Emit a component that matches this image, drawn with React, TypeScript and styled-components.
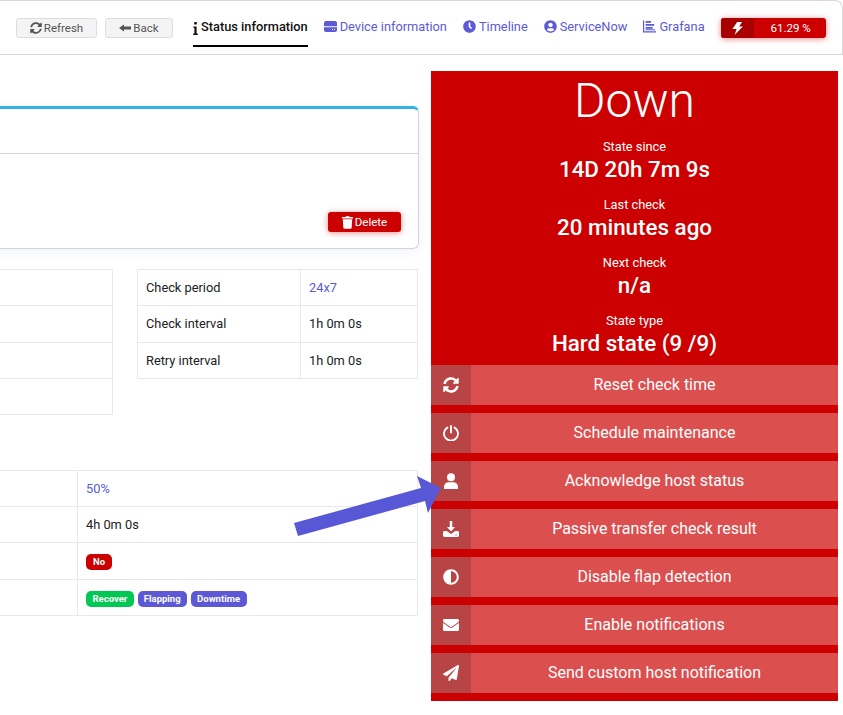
import React from "react";
import styled, { createGlobalStyle } from "styled-components";
import { FaSyncAlt, FaClock, FaUserCircle, FaTrash, FaAdjust, FaEnvelope, FaPaperPlane } from "react-icons/fa";

const Global = createGlobalStyle`
  html, body { margin: 0; padding: 0; background: #fff; }
  body { font-family: Roboto, "Liberation Sans", sans-serif; color: #212121; }
  * { box-sizing: border-box; }
`;

const Page = styled.div`
  position: relative;
  width: 843px;
  height: 715px;
  overflow: hidden;
  background: #fff;
`;

const TopBar = styled.header`
  height: 55px;
  display: flex;
  align-items: flex-start;
  padding: 17px 16px 0 16px;
  border-top: 1px solid #d9d9d9;
  border-right: 1px solid #d9d9d9;
  border-bottom: 1px solid #d6d6d6;
  border-top-right-radius: 8px;
`;

const PlainButton = styled.button`
  flex: none;
  height: 20px;
  width: ${(p) => p.$w}px;
  margin-right: ${(p) => p.$mr}px;
  display: inline-flex;
  align-items: center;
  justify-content: center;
  gap: 2px;
  padding: 0;
  font: 400 11.52px Roboto, sans-serif;
  color: #555;
  background: #f4f4f4;
  border: 1px solid #dedede;
  border-radius: 3px;
  svg { width: 12px; height: 12px; }
`;

const Tab = styled.div`
  flex: none;
  height: 29px;
  margin-right: 16px;
  display: inline-flex;
  align-items: flex-start;
  gap: 3px;
  padding-top: 1px;
  font-size: 12.8px;
  line-height: 15px;
  font-weight: ${(p) => (p.$active ? 500 : 400)};
  color: ${(p) => (p.$active ? "#111" : "#5c5ad6")};
  border-bottom: ${(p) => (p.$active ? "2px solid #000" : "none")};
  white-space: nowrap;
  svg { width: 13px; height: 13px; margin-top: 1px; flex: none; }
`;

const InfoGlyph = styled.svg`
  && { width: 5px; height: 13px; margin-top: 3px; }
`;

const Meter = styled.div`
  flex: none;
  width: 105px;
  height: 20px;
  display: flex;
  background: #cc0000;
  border-radius: 3px;
  color: #fff;
  font-size: 11.52px;
  box-shadow: 0 1px 6px rgba(204, 0, 0, 0.45);
  overflow: hidden;
`;

const MeterIcon = styled.div`
  width: 33px;
  display: flex;
  align-items: center;
  justify-content: center;
  background: #a90000;
  svg { width: 11px; height: 13px; }
`;

const MeterValue = styled.div`
  flex: 1;
  text-align: center;
  line-height: 20px;
  padding-left: 2px;
`;

const Main = styled.main`
  display: flex;
  align-items: flex-start;
  gap: 12px;
`;

const Left = styled.section`
  width: 419px;
  padding-top: 51px;
`;

const Card = styled.div`
  height: 143px;
  margin-left: -8px;
  background: #fff;
  border: 1px solid #d4d4d4;
  border-top: 3px solid #2fb2e8;
  border-radius: 6px;
  box-shadow: 0 2px 10px rgba(70, 90, 160, 0.08);
  display: flex;
  flex-direction: column;
`;

const CardHead = styled.div`
  height: 45px;
  border-bottom: 1px solid #d4d4d4;
`;

const CardBody = styled.div`
  flex: 1;
  display: flex;
  justify-content: flex-end;
  align-items: flex-start;
  padding: 58px 17px 0 0;
`;

const DangerButton = styled.button`
  width: 73px;
  height: 20px;
  display: inline-flex;
  align-items: center;
  justify-content: center;
  gap: 2px;
  padding: 0;
  border: none;
  border-radius: 3px;
  background: #cc0000;
  color: #fff;
  font: 400 11.5px Roboto, sans-serif;
  box-shadow: 0 1px 6px rgba(204, 0, 0, 0.45);
  svg { width: 11px; height: 13px; }
`;

const TableRow = styled.div`
  display: flex;
  align-items: flex-start;
  gap: 24px;
  margin-top: 20px;
`;

const Table = styled.table`
  border-collapse: collapse;
  table-layout: fixed;
  width: ${(p) => p.$w}px;
  font-size: 12.8px;
`;

const SideTable = styled(Table)`
  margin-left: -1px;
`;

const WideTable = styled(Table)`
  margin-top: 55px;
  margin-left: -1px;
`;

const Row = styled.tr`
  height: ${(p) => p.$h || 36}px;
`;

const Cell = styled.td`
  width: ${(p) => p.$w}px;
  padding: 0 8px ${(p) => (p.$lift ? 1 : 0)}px;
  border: 1px solid #e6e8ee;
  color: ${(p) => (p.$link ? "#5c5ad6" : "#212121")};
  white-space: nowrap;
`;

const Badge = styled.span`
  display: inline-block;
  height: 16px;
  line-height: 16px;
  padding: 0 ${(p) => p.$pad || 7}px;
  margin: 2px 4px 0 0;
  border-radius: 5px;
  background: ${(p) => p.$bg};
  color: #fff;
  font-size: 9.5px;
  font-weight: 700;
  vertical-align: middle;
`;

const Status = styled.aside`
  width: 407px;
  margin-top: 16px;
  background: #cc0000;
  color: #fff;
  padding-bottom: 8px;
`;

const StatusTitle = styled.div`
  height: 60px;
  text-align: center;
  font-size: 48px;
  font-weight: 300;
  line-height: 60px;
`;

const Metric = styled.div`
  height: 58px;
  padding-top: 8px;
  text-align: center;
`;

const MetricLabel = styled.div`
  font-size: 12.8px;
  line-height: 16px;
`;

const MetricValue = styled.div`
  font-size: 22.4px;
  font-weight: 500;
  line-height: 27px;
  margin-top: 1px;
`;

const Actions = styled.div`
  display: flex;
  flex-direction: column;
  gap: 8px;
  margin-top: 2px;
`;

const Action = styled.div`
  height: 40px;
  display: flex;
  background: #db4f4f;
`;

const ActionIcon = styled.div`
  width: 40px;
  display: flex;
  align-items: center;
  justify-content: center;
  background: #b84545;
  svg { width: 16px; height: 16px; }
`;

const ActionText = styled.div`
  flex: 1;
  text-align: center;
  font-size: 16px;
  line-height: 39px;
`;

const Arrow = styled.svg`
  position: absolute;
  left: 0;
  top: 0;
  pointer-events: none;
`;

const InfoIcon = () => (
  <InfoGlyph viewBox="0 0 5 13" fill="currentColor">
    <rect x="1.2" y="0" width="2.6" height="2.6" rx="0.6" />
    <path d="M0.3 4.4H3.6V11.6H4.8V13H0.2V11.6H1.4V5.8H0.3Z" />
  </InfoGlyph>
);

const BackIcon = () => (
  <svg viewBox="0 0 12 12" fill="currentColor">
    <path d="M0 6L5 2.4V4.4H12V7.6H5V9.6Z" />
  </svg>
);

const DeviceIcon = () => (
  <svg viewBox="0 0 13 13" fill="currentColor">
    <path d="M2 1h9a2 2 0 0 1 2 2v3.2H0V3a2 2 0 0 1 2-2Z" />
    <path fillRule="evenodd" d="M0 7.2h13V10a2 2 0 0 1-2 2H2a2 2 0 0 1-2-2ZM8 9v1h1V9Zm2 0v1h1V9Z" />
  </svg>
);

const GrafanaIcon = () => (
  <svg viewBox="0 0 13 13" fill="currentColor">
    <path d="M0 0.5h1.2V11.3H13v1.2H0Z" />
    <rect x="2.6" y="1" width="5.4" height="1.8" />
    <rect x="2.6" y="4" width="8.6" height="1.8" />
    <rect x="2.6" y="7" width="7" height="1.8" />
    <rect x="2.6" y="9.3" width="9.6" height="1" />
  </svg>
);

const BoltIcon = () => (
  <svg viewBox="0 0 11 13" fill="currentColor">
    <path d="M5.2 0H10L7.2 4.4H10.8L2.6 13L4.6 7H0.4Z" />
  </svg>
);

const PowerIcon = () => (
  <svg viewBox="0 0 16 16" fill="none" stroke="currentColor" strokeWidth="1.9" strokeLinecap="round">
    <path d="M8 1V7.6" />
    <path d="M4.4 2.6A7 7 0 1 0 11.6 2.6" />
  </svg>
);

const UserIcon = () => (
  <svg viewBox="0 0 16 16" fill="currentColor">
    <circle cx="8" cy="4.2" r="4" />
    <path d="M1 16v-2.2A4.6 4.6 0 0 1 5.6 9.2h4.8A4.6 4.6 0 0 1 15 13.8V16Z" />
  </svg>
);

const DownloadIcon = () => (
  <svg viewBox="0 0 16 16" fill="currentColor">
    <path d="M6.8 0h2.4v6H12L8 10.4 4 6h2.8Z" />
    <path fillRule="evenodd" d="M1.4 10h2.2L8 13l4.4-3h2.2A1.4 1.4 0 0 1 16 11.4v3.2A1.4 1.4 0 0 1 14.6 16H1.4A1.4 1.4 0 0 1 0 14.6v-3.2A1.4 1.4 0 0 1 1.4 10Zm11.1 3.4v1.1h1.1v-1.1Z" />
  </svg>
);

const actions = [
  { icon: <FaSyncAlt />, text: "Reset check time" },
  { icon: <PowerIcon />, text: "Schedule maintenance" },
  { icon: <UserIcon />, text: "Acknowledge host status" },
  { icon: <DownloadIcon />, text: "Passive transfer check result" },
  { icon: <FaAdjust />, text: "Disable flap detection" },
  { icon: <FaEnvelope />, text: "Enable notifications" },
  { icon: <FaPaperPlane />, text: "Send custom host notification" },
];

const metrics = [
  ["State since", "14D 20h 7m 9s"],
  ["Last check", "20 minutes ago"],
  ["Next check", "n/a"],
  ["State type", "Hard state (9 /9)"],
];

export default function App() {
  return (
    <Page>
      <Global />
      <TopBar>
        <PlainButton $w={81} $mr={8}><FaSyncAlt />Refresh</PlainButton>
        <PlainButton $w={68} $mr={20}><BackIcon />Back</PlainButton>
        <Tab $active><InfoIcon />Status information</Tab>
        <Tab><DeviceIcon />Device information</Tab>
        <Tab><FaClock />Timeline</Tab>
        <Tab><FaUserCircle />ServiceNow</Tab>
        <Tab><GrafanaIcon />Grafana</Tab>
        <Meter>
          <MeterIcon><BoltIcon /></MeterIcon>
          <MeterValue>61.29 %</MeterValue>
        </Meter>
      </TopBar>
      <Main>
        <Left>
          <Card>
            <CardHead />
            <CardBody>
              <DangerButton><FaTrash />Delete</DangerButton>
            </CardBody>
          </Card>
          <TableRow>
            <SideTable $w={114}>
              <tbody>
                <Row><Cell /></Row>
                <Row $h={37}><Cell /></Row>
                <Row><Cell /></Row>
                <Row><Cell /></Row>
              </tbody>
            </SideTable>
            <Table $w={281}>
              <tbody>
                <Row><Cell $w={163}>Check period</Cell><Cell $link>24x7</Cell></Row>
                <Row $h={37}><Cell $lift>Check interval</Cell><Cell $lift>1h 0m 0s</Cell></Row>
                <Row><Cell>Retry interval</Cell><Cell>1h 0m 0s</Cell></Row>
              </tbody>
            </Table>
          </TableRow>
          <WideTable $w={419}>
            <tbody>
              <Row><Cell $w={78} /><Cell $link>50%</Cell></Row>
              <Row><Cell /><Cell>4h 0m 0s</Cell></Row>
              <Row $h={37}><Cell /><Cell><Badge $bg="#cc0000">No</Badge></Cell></Row>
              <Row>
                <Cell />
                <Cell>
                  <Badge $bg="#00c853" $pad={6.5}>Recover</Badge>
                  <Badge $bg="#5c58d6" $pad={6}>Flapping</Badge>
                  <Badge $bg="#5c58d6" $pad={6.5}>Downtime</Badge>
                </Cell>
              </Row>
            </tbody>
          </WideTable>
        </Left>
        <Status>
          <StatusTitle>Down</StatusTitle>
          {metrics.map(([label, value]) => (
            <Metric key={label}>
              <MetricLabel>{label}</MetricLabel>
              <MetricValue>{value}</MetricValue>
            </Metric>
          ))}
          <Actions>
            {actions.map((a) => (
              <Action key={a.text}>
                <ActionIcon>{a.icon}</ActionIcon>
                <ActionText>{a.text}</ActionText>
              </Action>
            ))}
          </Actions>
        </Status>
      </Main>
      <Arrow width="843" height="715" viewBox="0 0 843 715">
        <path d="M294 523 L421 488 L417 476 L441 488 L428 513 L425 501 L298 536 Z" fill="#5858d6" />
      </Arrow>
    </Page>
  );
}
